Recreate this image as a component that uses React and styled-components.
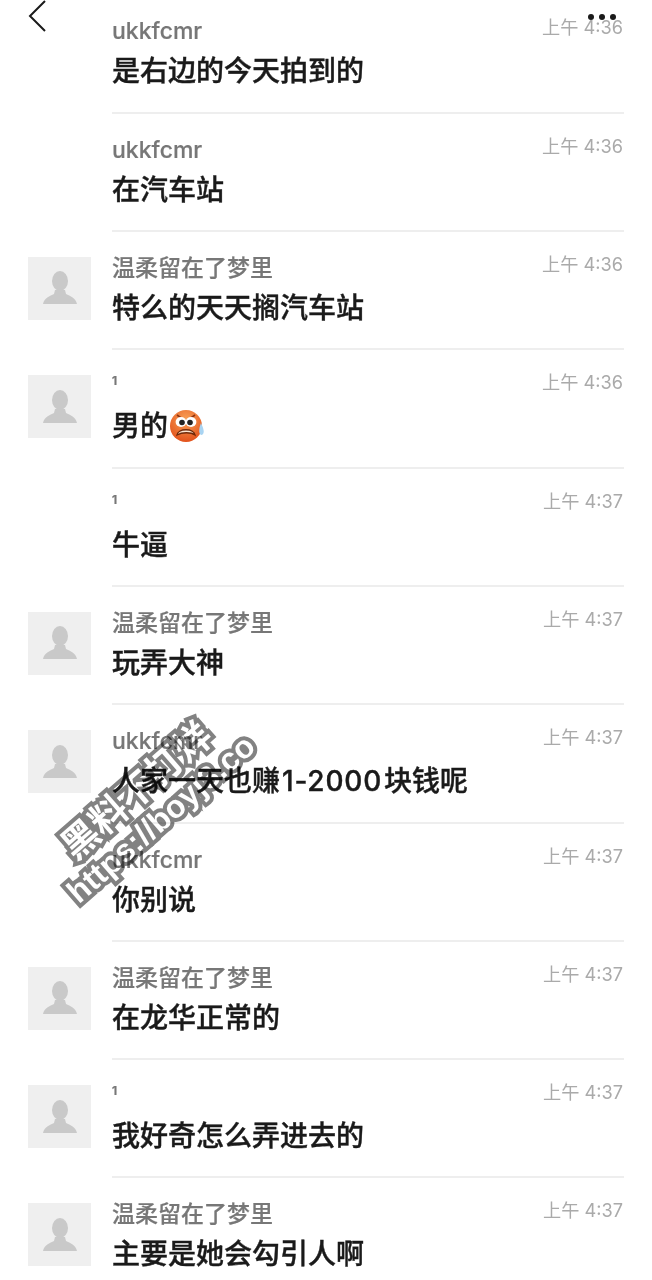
import React from "react";
import styled, { createGlobalStyle } from "styled-components";

const GlobalStyle = createGlobalStyle`
  html, body {
    margin: 0;
    padding: 0;
    background: #ffffff;
  }
`;

const Page = styled.div`
  position: relative;
  width: 652px;
  height: 1280px;
  overflow: hidden;
  background: #ffffff;
  font-family: Inter, "Noto Sans CJK SC", sans-serif;
`;

const List = styled.div`
  display: flex;
  flex-direction: column;
  margin-top: -4.8px;
`;

const Row = styled.div`
  display: flex;
  height: 118.33px;
  flex-shrink: 0;
  box-sizing: border-box;
  padding: 0 28px;
`;

const AvatarSlot = styled.div`
  width: 84px;
  flex-shrink: 0;
  padding-top: 25px;
`;

const Avatar = styled.div`
  width: 63px;
  height: 63px;
  background: #efefef;
  display: flex;
  align-items: center;
  justify-content: center;
`;

const Body = styled.div`
  flex: 1;
  position: relative;
  border-bottom: 2px solid #eeeeee;
  box-sizing: border-box;
`;

const Name = styled.div`
  position: absolute;
  left: 0;
  top: ${p => (p.$tiny ? "17px" : "22px")};
  font-size: ${p => (p.$tiny ? "12px" : "23px")};
  font-weight: ${p => (p.$tiny ? 700 : 500)};
  line-height: 28px;
  color: #777777;
  -webkit-text-stroke: 0.2px #777777;
`;

const Time = styled.div`
  position: absolute;
  right: 1px;
  top: 19px;
  font-size: 18.2px;
  line-height: 26px;
  color: #aaaaaa;
`;

const Message = styled.div`
  position: absolute;
  left: 0;
  top: 56px;
  display: flex;
  align-items: center;
  font-size: 28px;
  font-weight: 500;
  line-height: 40px;
  color: #1a1a1a;
  -webkit-text-stroke: 0.4px #1a1a1a;
`;

const Digits = styled.span`
  margin: 0 2px;
  letter-spacing: 0.8px;
`;

const BackIcon = styled.svg`
  position: absolute;
  left: 27px;
  top: 0;
`;

const MoreDots = styled.div`
  position: absolute;
  left: 588px;
  top: 14px;
  display: flex;
  gap: 5px;
`;

const Dot = styled.span`
  width: 6px;
  height: 6px;
  border-radius: 50%;
  background: #1a1a1a;
`;

const Watermark = styled.div`
  position: absolute;
  left: -1px;
  top: 769px;
  width: 300px;
  transform: rotate(-41deg);
  text-align: center;
  font-family: "Liberation Sans", "Noto Sans CJK SC", sans-serif;
  color: #ffffff;
  white-space: nowrap;
  -webkit-text-stroke: 8px #828282;
  paint-order: stroke fill;
  mix-blend-mode: multiply;
`;

const WatermarkLine = styled.div`
  font-size: ${p => p.$size}px;
  font-weight: 700;
  line-height: 36px;
`;

const messages = [
  { name: "ukkfcmr", time: "上午 4:36", text: "是右边的今天拍到的", noAvatar: true },
  { name: "ukkfcmr", time: "上午 4:36", text: "在汽车站", noAvatar: true },
  { name: "温柔留在了梦里", time: "上午 4:36", text: "特么的天天搁汽车站" },
  { name: "1", tiny: true, time: "上午 4:36", text: "男的", emoji: true },
  { name: "1", tiny: true, time: "上午 4:37", text: "牛逼", noAvatar: true },
  { name: "温柔留在了梦里", time: "上午 4:37", text: "玩弄大神" },
  { name: "ukkfcmr", time: "上午 4:37", text: "人家一天也赚", digits: "1-2000", tail: "块钱呢" },
  { name: "ukkfcmr", time: "上午 4:37", text: "你别说", noAvatar: true },
  { name: "温柔留在了梦里", time: "上午 4:37", text: "在龙华正常的" },
  { name: "1", tiny: true, time: "上午 4:37", text: "我好奇怎么弄进去的" },
  { name: "温柔留在了梦里", time: "上午 4:37", text: "主要是她会勾引人啊" }
];

const PersonIcon = () => (
  <svg width="34" height="34" viewBox="0 0 34 34">
    <ellipse cx="17" cy="10" rx="8" ry="10" fill="#c9c9c9" />
    <path d="M12 19 L22 19 L23 23 C27 25 33 27 34 33 L0 33 C1 27 7 25 11 23 Z" fill="#c9c9c9" />
  </svg>
);

const SweatEmoji = () => (
  <svg width="36" height="36" viewBox="0 0 36 36" style={{ marginLeft: 2 }}>
    <defs>
      <radialGradient id="face" cx="50%" cy="30%" r="70%">
        <stop offset="0%" stopColor="#f9a257" />
        <stop offset="100%" stopColor="#e2521c" />
      </radialGradient>
    </defs>
    <circle cx="16" cy="18" r="16" fill="url(#face)" />
    <path d="M7 7 L14 12 M25 7 L18 12" stroke="#8f3410" strokeWidth="1.6" fill="none" />
    <ellipse cx="11" cy="14" rx="5.4" ry="5" fill="#ffffff" />
    <ellipse cx="21" cy="14" rx="5.4" ry="5" fill="#ffffff" />
    <circle cx="12" cy="14.5" r="2.8" fill="#222222" />
    <circle cx="20" cy="14.5" r="2.8" fill="#222222" />
    <path d="M7 27 C8 20 24 20 25 27 C21 24 12 24 7 27 Z" fill="#fde6d2" stroke="#6f2808" strokeWidth="1.4" />
    <path d="M31 15 C34 21 35 26 31.5 27 C28 26 29 20 31 15 Z" fill="#a9d4f2" />
  </svg>
);

export default function App() {
  return (
    <Page>
      <GlobalStyle />
      <List>
        {messages.map((m, i) => (
          <Row key={i}>
            <AvatarSlot>
              {!m.noAvatar && (
                <Avatar>
                  <PersonIcon />
                </Avatar>
              )}
            </AvatarSlot>
            <Body>
              <Name $tiny={m.tiny}>{m.name}</Name>
              <Time>{m.time}</Time>
              <Message>
                {m.text}
                {m.digits && <Digits>{m.digits}</Digits>}
                {m.tail}
                {m.emoji && <SweatEmoji />}
              </Message>
            </Body>
          </Row>
        ))}
      </List>
      <BackIcon width="20" height="32" viewBox="0 0 20 32">
        <path d="M18 1 L3 16 L18 31" fill="none" stroke="#1a1a1a" strokeWidth="2" />
      </BackIcon>
      <MoreDots>
        <Dot />
        <Dot />
        <Dot />
      </MoreDots>
      <Watermark>
        <WatermarkLine $size={37}>黑料不打烊</WatermarkLine>
        <WatermarkLine $size={32}>https://boyj3.co</WatermarkLine>
      </Watermark>
    </Page>
  );
}
